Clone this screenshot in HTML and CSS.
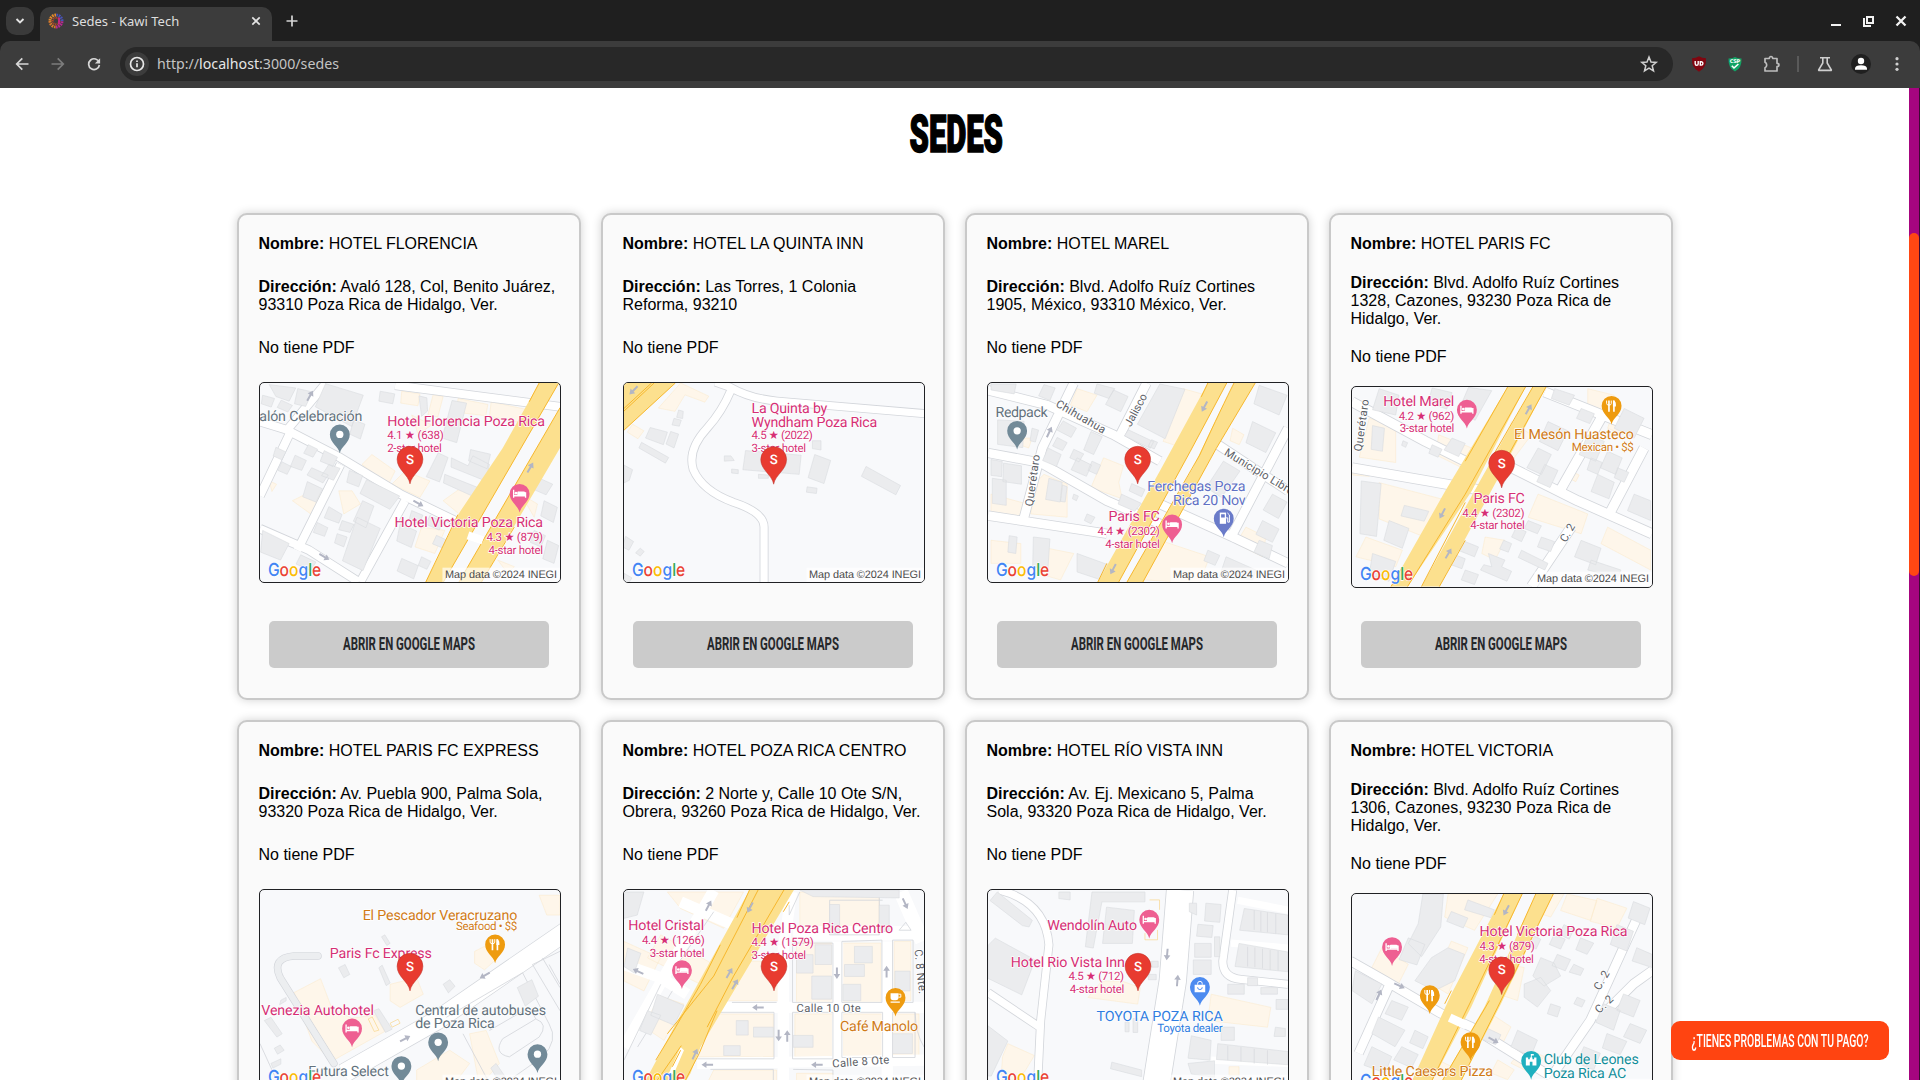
FILE: index.html
```html
<!DOCTYPE html>
<html lang="es">
<head>
<meta charset="utf-8">
<title>Sedes - Kawi Tech</title>
<link rel="stylesheet" href="styles.css">
</head>
<body>
<svg class="defs" width="0" height="0" aria-hidden="true">
  <defs>
    <path id="pin" d="M0 57C-4 36-30 25-30 0A30 30 0 1 1 30 0C30 25 4 36 0 57z"/>
    <g id="place"><use href="#pin" fill="#728a98"/><circle r="11" fill="#fff"/></g>
    <g id="hotel"><use href="#pin" fill="#ee5f92"/><path d="M-18-12v24M-18 6h36M18-5v17M-5-6v10" stroke="#fff" stroke-width="4" fill="none"/><circle cx="-11" cy="-2" r="4" fill="#fff"/><path d="M-5-7h18q5 0 5 5v7h-23z" fill="#fff"/></g>
    <g id="food"><use href="#pin" fill="#ee9b0f"/><path d="M-8-16v34M7-16v34" stroke="#fff" stroke-width="5"/><path d="M-15-16v9q0 5 7 5t7-5v-9" fill="none" stroke="#fff" stroke-width="3"/><path d="M4-16q9 1 9 12v6h-9z" fill="#fff"/></g>
    <g id="cafe"><use href="#pin" fill="#ee9b0f"/><path d="M-15-14h24v13q0 8-8 8h-8q-8 0-8-8zM-15 11h28v4h-28z" fill="#fff"/><path d="M9-11h7v9h-7" fill="none" stroke="#fff" stroke-width="3"/></g>
    <g id="fuel"><use href="#pin" fill="#6a7bc9"/><path d="M-12-18h19v34h-19z" fill="#fff"/><path d="M-8-13h11v10h-11z" fill="#6a7bc9"/><path d="M7-2h5v13h5v-22l-6-6" fill="none" stroke="#fff" stroke-width="3"/></g>
    <g id="shop"><use href="#pin" fill="#4c8bf0"/><path d="M-16-7h32v23h-32z" fill="#fff"/><path d="M-7-7v-3a7 7 0 0 1 14 0v3" fill="none" stroke="#fff" stroke-width="3"/><path d="M-7 1a7 7 0 0 0 14 0" fill="none" stroke="#4c8bf0" stroke-width="3"/></g>
    <g id="civic"><use href="#pin" fill="#1fb0bf"/><path d="M-16-10h7v5h5v-5h8v5h5v-5h7V14H4V3h-8v11h-12z" fill="#fff"/><path d="M-1-8v-13h9v5H2v8" fill="#fff"/></g>
    <g id="marker"><path d="M0 75C-5 46-39 32-39 0A39 39 0 1 1 39 0C39 32 5 46 0 75z" fill="#e83b30" stroke="#b9362d" stroke-width="1.5"/><text class="s" x="0" y="14">S</text></g>
    <g id="arrow" fill="#b3b6c4"><path d="M-3 17V-3H-10L0-18 10-3H3V17z"/></g>
    <g id="brand"><text class="google" x="24" y="585" textLength="161" lengthAdjust="spacingAndGlyphs"><tspan fill="#4285f4">G</tspan><tspan fill="#ea4335">o</tspan><tspan fill="#fbbc05">o</tspan><tspan fill="#4285f4">g</tspan><tspan fill="#34a853">l</tspan><tspan fill="#ea4335">e</tspan></text>
      <rect x="551" y="560" width="355" height="45" fill="#fff" fill-opacity=".65"/><text class="credit" x="559" y="590" textLength="338">Map data ©2024 INEGI</text></g>
  </defs>
</svg>

<header class="browser">
  <div class="tabs">
    <div class="tab-search"><svg width="12" height="12" viewBox="0 0 12 12"><path d="M2.500 4L6 7.500 9.500 4" fill="none" stroke="#e3e3e3" stroke-width="1.900"/></svg></div>
    <div class="tab">
      <svg width="16" height="16" viewBox="-8 -8 16 16"><g fill="none" stroke-width="3" stroke-dasharray="1.600 .8"><path d="M0-6A6 6 0 0 0-6 0" stroke="#e48a2c"/><path d="M-6 0A6 6 0 0 0 0 6" stroke="#d9792b"/><path d="M0 6A6 6 0 0 0 6 0" stroke="#b82a92"/><path d="M6 0A6 6 0 0 0 0-6" stroke="#4753b8"/></g><circle r="3.300" fill="none" stroke="#b5472c" stroke-width="2" stroke-dasharray="1 .7"/><path d="M3-3.500v7" stroke="#d02390" stroke-width="1.700"/></svg>
      <span class="tab-title">Sedes - Kawi Tech</span>
      <svg width="10" height="10" viewBox="0 0 10 10"><path d="M1.300 1.300l7.400 7.400M8.700 1.300L1.300 8.700" stroke="#e3e3e3" stroke-width="1.700"/></svg>
    </div>
    <svg class="plus" width="12" height="12" viewBox="0 0 12 12"><path d="M6 .5v11M.5 6h11" stroke="#d5d5d5" stroke-width="1.700"/></svg>
    <div class="window">
      <svg width="12" height="12" viewBox="0 0 12 12"><path d="M1 10h10" stroke="#f2f2f2" stroke-width="2"/></svg>
      <svg width="12" height="12" viewBox="0 0 12 12"><path d="M4 2h6v6H4zM1 3v8h7" fill="none" stroke="#f2f2f2" stroke-width="2"/></svg>
      <svg width="12" height="12" viewBox="0 0 12 12"><path d="M1.500 1.500l9 9M10.500 1.500l-9 9" stroke="#f2f2f2" stroke-width="2.300"/></svg>
    </div>
  </div>
  <div class="toolbar">
    <div class="tool"><svg width="14" height="14" viewBox="0 0 14 14"><path d="M13.500 7H2M7.300 1.300L1.700 7l5.600 5.700" fill="none" stroke="#d8d8d8" stroke-width="1.700"/></svg></div>
    <div class="tool"><svg width="14" height="14" viewBox="0 0 14 14"><path d="M.5 7H12M6.700 1.300L12.300 7l-5.600 5.700" fill="none" stroke="#7c7c7c" stroke-width="1.700"/></svg></div>
    <div class="tool"><svg width="14" height="14" viewBox="0 0 14 14"><path d="M12.200 5.500A5.400 5.400 0 1 0 12.400 8" fill="none" stroke="#d8d8d8" stroke-width="1.700"/><path d="M13.100 1.200v5.200H7.900z" fill="#d8d8d8"/></svg></div>
    <div class="omnibox">
      <div class="info"><svg width="16" height="16" viewBox="0 0 16 16"><circle cx="8" cy="8" r="6.500" fill="none" stroke="#e8e8e8" stroke-width="1.700"/><path d="M8 7.300v4M8 4.400v1.700" stroke="#e8e8e8" stroke-width="1.700"/></svg></div>
      <span class="url">http://<b>localhost</b>:3000/sedes</span>
      <svg width="18" height="18" viewBox="0 0 18 18"><path d="M9 2l2 5 5.200.4-4 3.400 1.300 5.200L9 13.200 4.500 16l1.300-5.200-4-3.400L7 7z" fill="none" stroke="#d0d0d0" stroke-width="1.500"/></svg>
    </div>
    <div class="tool"><svg width="16" height="16" viewBox="0 0 16 16"><path d="M8 .3Q11 2.300 15 2.300 15.700 12 8 15.700.3 12 1 2.300 5 2.300 8 .3z" fill="#800610"/><path d="M4.200 5v2.700q0 1.600 1.500 1.600T7.200 7.700V5M9.300 5.700v3.400h.9a1.700 1.700 0 0 0 0-3.400z" fill="none" stroke="#fff" stroke-width="1.400"/></svg></div>
    <div class="tool"><svg width="14" height="16" viewBox="0 0 14 16"><path d="M7 1Q10 2.500 13.500 2.500 14 12 7 15.500 0 12 .5 2.500 4 2.500 7 1z" fill="#12a466"/><text x="1.800" y="7" class="csp" textLength="10.400">CSP</text><path d="M3.800 9.700L6 12l4.400-4" fill="none" stroke="#fff" stroke-width="1.600"/></svg></div>
    <div class="tool"><svg width="18" height="18" viewBox="0 0 18 18"><path d="M3 3.500h4.300q.2-2 1.700-2t1.700 2H15v4.800q2 .2 2 1.700t-2 1.700V16H3v-3.300q1.700-.7 1.700-2.700T3 7.300z" fill="none" stroke="#bdbdbd" stroke-width="1.700" stroke-linejoin="round"/></svg></div>
    <div class="divider"></div>
    <div class="tool"><svg width="16" height="16" viewBox="0 0 16 16"><path d="M3 1.800h10M5.800 2v5L1.700 13.800q-.2.600.4.600h11.800q.6 0 .4-.6L10.200 7V2" fill="none" stroke="#cfcfcf" stroke-width="1.600"/></svg></div>
    <div class="tool"><svg width="20" height="20" viewBox="0 0 20 20"><circle cx="10" cy="10" r="10" fill="#202020"/><circle cx="10" cy="7" r="3.200" fill="#fff"/><path d="M4 15.800v-1.500Q4.500 11.300 10 11.300t6 3v1.500z" fill="#fff"/></svg></div>
    <div class="tool"><svg width="4" height="14" viewBox="0 0 4 14"><circle cx="2" cy="1.700" r="1.600" fill="#d0d0d0"/><circle cx="2" cy="7" r="1.600" fill="#d0d0d0"/><circle cx="2" cy="12.300" r="1.600" fill="#d0d0d0"/></svg></div>
  </div>
</header>

<div class="viewport">
<main class="page">
  <h1 class="heading"><svg width="96" height="40" viewBox="0 0 96 40"><text x="1.500" y="37.500" textLength="93.500" lengthAdjust="spacingAndGlyphs">SEDES</text></svg></h1>
  <section class="grid">

    <article class="card">
      <p><b>Nombre:</b> HOTEL FLORENCIA</p>
      <p><b>Dirección:</b> Avaló 128, Col, Benito Juárez, 93310 Poza Rica de Hidalgo, Ver.</p>
      <p>No tiene PDF</p>
      <svg class="map" viewBox="102 543 906 605" preserveAspectRatio="none">
        <path class="com" d="M410 790l30-30 70 50-20 40zM500 850l40-40 75 30-30 50zM200 900l60-30 35 20-40 50zM340 870l40 0 25 40-50 30zM530 568l55 8-6 36-52-8zM625 578l30 6-16 62-30-6zM700 590l90 18-6 34-88-10zM800 600l110 24-20 40-95-20zM655 900l70-50 50 30-60 70zM590 980l70 10-30 70-60-20zM130 840l22 10-14 22zM560 640l60 30-40 30zM820 1080l50 20-20 20zM890 880l50 30-10 40z"/>
        <path class="casing" style="stroke-width:29" d="M102 660L180 684 345 770 530 882 700 965M180 690L300 545M102 885L190 700M345 790L215 1050M540 900L405 1146M102 985L250 1050 400 1146M510 550L1008 615"/>
        <path class="road" style="stroke-width:24" d="M102 660L180 684 345 770 530 882 700 965M180 690L300 545M102 885L190 700M345 790L215 1050M540 900L405 1146M102 985L250 1050 400 1146M510 550L1008 615"/>
        <path class="bld" d="M300 545l114 35-35 95-110-60zM385 655l34 13-14 45-32-15zM465 568l44 8-6 30-42-8zM582 582l24 6 2 40-18 16zM682 596l44 8-30 120-44-14zM130 548l80 10-20 40-40-14zM166 595l34 16-14 20-32-14zM216 560l44 10-20 44-34-8zM110 580l36 10-10 26-30-10zM640 755l30 14-26 74-40-16zM680 770l50 24 15-30 50 26-12 50-104-42zM660 820l100 40-12 28-92-42zM738 745l60 14-10 44-56-24zM248 730l28 14-14 24-28-12zM296 748l40 20-14 28-38-16zM208 762l34 16-14 30-34-12zM168 782l28 14-12 24-28-12zM258 800l50 22-16 24-48-24zM310 790l34 12-20 36-36-14zM245 842l46 22-20 40-40-16zM150 738l30 14-12 24-26-12zM372 808l40 16-12 34-36-14zM424 836l100 50-30 40-90-48zM412 900l34 16-24 66-38-20zM310 918l40 24-10 26-44-16zM350 960l36 12-12 24-34-8zM275 966l32 16-10 26-34-12zM395 950l70 34-52 128-62-30zM335 1000l30 10-10 30-28-12zM560 930l34 14-12 26-30-12zM615 945l40 20-12 24-40-18zM525 970l50 22-16 50-44-20zM635 1005l30 14-12 24-30-12zM590 1070l28 14-12 24-26-12zM530 1075l50 22-14 40-50-24zM925 790l32 14-14 30-30-14zM942 830l44 20-20 32-42-18zM960 900l40 20-12 46-38-20zM930 990l34 16-14 34-32-14zM970 1020l34 16-14 54-34-14zM110 990l80 40-26 50-60-24zM225 1064l46 22-16 26-44-20z"/>
        <path class="hwy" d="M602 1148L705 935 835 740 945 543H1004L655 1148zM702 1148L1008 618V740L770 1148z"/>
        <path class="line" d="M655 1148L1004 543M702 1148L1008 618M602 1148L700 942M945 543L915 600M770 1148L870 980"/>
        <path class="road" style="stroke-width:25" d="M730 1005L775 1020"/>
        <use href="#arrow" transform="translate(253 582) rotate(30)"/><use href="#arrow" transform="translate(580 908) rotate(120)"/><use href="#arrow" transform="translate(296 1070) rotate(120)"/><use href="#arrow" transform="translate(918 800) rotate(30)"/>
        <text class="lbl gray" x="100" y="657" textLength="311">alón Celebración</text><use href="#place" x="343" y="699"/>
        <g class="pink"><text class="lbl" x="486" y="672" textLength="477">Hotel Florencia Poza Rica</text><text class="sub" x="486" y="714" textLength="171">4.1 ★ (638)</text><text class="sub" x="486" y="752" textLength="165">2-star hotel</text>
        <text class="lbl" x="508" y="981" textLength="449">Hotel Victoria Poza Rica</text><text class="sub" x="786" y="1023" textLength="171">4.3 ★ (879)</text><text class="sub" x="792" y="1062" textLength="165">4-star hotel</text></g>
        <use href="#hotel" x="886" y="879"/><use href="#marker" x="555" y="774"/><use href="#brand" x="102" y="543"/>
      </svg>
      <button class="open"><svg width="136" height="20" viewBox="0 0 136 20"><text x="2" y="16" textLength="132" lengthAdjust="spacingAndGlyphs">ABRIR EN GOOGLE MAPS</text></svg></button>
    </article>

    <article class="card">
      <p><b>Nombre:</b> HOTEL LA QUINTA INN</p>
      <p><b>Dirección:</b> Las Torres, 1 Colonia Reforma, 93210</p>
      <p>No tiene PDF</p>
      <svg class="map" viewBox="99 33 906 605" preserveAspectRatio="none">
        <path class="com" d="M270 33l85 40-12 18-60-22-30 50-50-10zM125 158l34 20-18 24-32-20z"/>
        <path class="casing" style="stroke-width:27" d="M375 30L420 46Q480 80 560 88L1008 126M422 55Q395 120 350 170Q290 235 308 295Q335 360 430 395Q522 425 522 470V640"/>
        <path class="road" style="stroke-width:22" d="M375 30L420 46Q480 80 560 88L1008 126M422 55Q395 120 350 170Q290 235 308 295Q335 360 430 395Q522 425 522 470V640"/>
        <path class="bld" d="M264 115l14 4-2 22-18-4zM250 140l22 6-6 18-22-4zM178 168l52 14-12 38-54-20zM240 180l24 8-14 42-24-12zM152 213l82 46-10 17-80-46zM466 238l168 14-6 58-170-14zM402 254l20 0 10 14-30 2zM424 294l20 2 0 12-20-2zM675 250l48 18-20 70-48-18zM652 348l30 4-2 16-30-4zM830 286l104 58-14 28-104-56zM668 208l26 0 0 28-26-4zM505 310l30 2v10h-30zM99 282l26 14-10 32-16 8zM104 498l24 16-14 26-20-10zM148 534l12 10-12 14-14-10zM99 610l24 14-10 16h-14z"/>
        <path class="hwy" d="M99 33H254L99 176z"/><path class="line" d="M254 33L99 176M190 33L99 118M182 33L99 110"/>
        <use href="#arrow" transform="translate(128 55) rotate(225)"/>
        <g class="pink"><text class="lbl" x="484" y="123" textLength="229">La Quinta by</text><text class="lbl" x="484" y="165" textLength="380">Wyndham Poza Rica</text><text class="sub" x="484" y="204" textLength="185">4.5 ★ (2022)</text><text class="sub" x="484" y="242" textLength="165">3-star hotel</text></g>
        <use href="#marker" x="551" y="265"/><use href="#brand" x="99" y="33"/>
      </svg>
      <button class="open"><svg width="136" height="20" viewBox="0 0 136 20"><text x="2" y="16" textLength="132" lengthAdjust="spacingAndGlyphs">ABRIR EN GOOGLE MAPS</text></svg></button>
    </article>

    <article class="card">
      <p><b>Nombre:</b> HOTEL MAREL</p>
      <p><b>Dirección:</b> Blvd. Adolfo Ruíz Cortines 1905, México, 93310 México, Ver.</p>
      <p>No tiene PDF</p>
      <svg class="map" viewBox="81 63 906 605" preserveAspectRatio="none">
        <path class="com" d="M430 290l60 24-14 50 10 50-94-34zM670 80l70 20-70 160-60-20zM250 340l70 30v100l-110-10 20-100zM600 540l150 50-30 80-170-10zM90 400l110 30 0 50-110-20zM240 560l100 20-40 80-70-20zM350 80l60 20-30 50-50-20zM820 200l34 20-14 30-28-12zM860 500l60 30-10 60-80-40zM180 230l34 0-10 30-30-10zM90 540l90 10v60h-90z"/>
        <path class="casing" style="stroke-width:31" d="M81 85L260 130 460 220 600 300M340 63L245 260 190 470M560 63L470 240M81 275L240 305 440 420 600 490M81 465L440 520M600 430L820 530 987 610M987 200L810 540M760 240L987 390"/>
        <path class="road" style="stroke-width:26" d="M81 85L260 130 460 220 600 300M340 63L245 260 190 470M560 63L470 240M81 275L240 305 440 420 600 490M81 465L440 520M600 430L820 530 987 610M987 200L810 540M760 240L987 390"/>
        <path class="bld" d="M90 66l76 0-6 30-70-12zM250 68l34 10-16 38-34-14zM410 66l54 14-18 30-44-16zM460 84l44 20-22 46-46-22zM600 66l76 16-60 150-84-44zM505 205l76 36-10 20-78-38zM575 235l18 8-10 20-18-8zM308 178l40 22-16 28-42-22zM290 228l30 16-14 24-30-14zM262 260l40 20-14 36-42-18zM340 264l30 14-14 24-28-12zM392 210l34 16-26 54-30-14zM350 290l44 22-16 34-46-20zM395 300l26 12-12 28-26-12zM110 175l80 4-4 80-76-10zM214 200l20 6-10 36-16-4zM90 295l34 6-2 46-32-4zM128 306l54 8 0 56-56-8zM94 352l42 6v76l-42-6zM265 352l40 12-6 60-44-8zM306 372l14 6-6 46-14-2zM515 368l40 18-10 22-38-18zM484 400l60 28-20 24-50-22zM340 400l14 6-6 14-12-6zM380 460l24 10-12 20-20-10zM145 526l24 4-4 50-24-4zM218 530l50 6-6 90-46-6zM350 580l110 40-20 46-90-30zM792 300l50 30-56 80-46-30zM900 70l84 30-24 60-76-34zM880 180l70 34-30 60-60-30zM940 400l44 24-26 50-46-26zM910 480l50 26-20 40-50-24zM900 540l40 16-10 40-46-20zM745 570l36 16-14 30-34-14zM800 590l90 40-10 30-100-10z"/>
        <path class="hwy" d="M412 668L600 330 745 63H802L692 270 475 668zM500 668L700 320Q760 190 824 63H888L770 262 548 668z"/>
        <path class="line" d="M412 668L440 610M745 63L725 105M802 63L692 270 475 668M500 668L720 282Q790 130 824 63M888 63L770 262 548 668"/>
        <use href="#arrow" transform="translate(266 212) rotate(25)"/><use href="#arrow" transform="translate(735 134) rotate(208)"/><use href="#arrow" transform="translate(459 627) rotate(208)"/>
        <g class="street"><text transform="translate(283 133) rotate(30)" textLength="168">Chihuahua</text><text transform="translate(512 198) rotate(-62)" textLength="108">Jalisco</text><text transform="translate(216 438) rotate(-82)" textLength="158">Querétaro</text><text transform="translate(792 280) rotate(31)" textLength="238">Municipio Libre</text></g>
        <text class="lbl gray" x="104" y="165" textLength="157">Redpack</text><use href="#place" x="169" y="208"/>
        <g class="blue2"><text class="lbl" x="562" y="390" textLength="297">Ferchegas Poza</text><text class="lbl" x="640" y="432" textLength="219">Rica 20 Nov</text></g><use href="#fuel" x="793" y="474"/>
        <g class="pink"><text class="lbl" x="445" y="483" textLength="155">Paris FC</text><text class="sub" x="412" y="525" textLength="188">4.4 ★ (2302)</text><text class="sub" x="435" y="563" textLength="165">4-star hotel</text></g>
        <use href="#hotel" x="637" y="492"/><use href="#marker" x="533" y="294"/><use href="#brand" x="81" y="63"/>
      </svg>
      <button class="open"><svg width="136" height="20" viewBox="0 0 136 20"><text x="2" y="16" textLength="132" lengthAdjust="spacingAndGlyphs">ABRIR EN GOOGLE MAPS</text></svg></button>
    </article>

    <article class="card">
      <p><b>Nombre:</b> HOTEL PARIS FC</p>
      <p><b>Dirección:</b> Blvd. Adolfo Ruíz Cortines 1328, Cazones, 93230 Poza Rica de Hidalgo, Ver.</p>
      <p>No tiene PDF</p>
      <svg class="map" viewBox="78 375 906 605" preserveAspectRatio="none">
        <path class="com" d="M130 470l80 24v110l-110-16zM80 610l50 6v30l-50-4zM160 665l190 50-40 120-150-60zM640 700l150 60-20 60-160-50zM340 520l100 40-30 60-80-40zM560 480l60 40-60 80-40-30zM790 380l80 20-20 50-60-20zM120 830l110 40-20 50-120-30zM850 800l130 70v60l-150-80zM740 630l24 12-10 20-24-12zM480 830l60 10-30 60-40-20zM860 470l60 20-20 30-50-20z"/>
        <path class="casing" style="stroke-width:33" d="M78 420L300 540 460 620M78 620L480 690M540 610L760 720 984 820M660 390L984 520M830 470L700 700M960 560L850 770M740 800L620 980"/>
        <path class="road" style="stroke-width:28" d="M78 420L300 540 460 620M78 620L480 690M540 610L760 720 984 820M660 390L984 520M830 470L700 700M960 560L850 770M740 800L620 980"/>
        <path class="bld" d="M160 380l60 20-10 60-70-16zM320 378l60 14-16 50-56-20zM430 376l70 10-50 90-50-30zM140 492l36 8-6 70-34-6zM320 550l30 14-12 24-28-12zM380 530l40 16-20 40-44-20zM232 538l14 6-6 14-12-6zM106 660l60 8-14 160-50-8zM236 734l74 18-14 30-70-16zM190 780l60 24-20 60-56-24zM140 880l70 24-20 60-60-20zM640 560l40 20-30 60-44-20zM670 480l60 28-30 60-56-28zM690 380l60 20-16 30-54-20zM660 610l40 18-24 52-40-18zM790 520l50 20-26 60-50-20zM850 570l44 20-20 50-46-20zM820 640l50 24-16 50-54-22zM800 590l34 14-14 36-32-14zM880 620l34 14-14 30-30-14zM930 700l50 20v60l-70-30zM900 440l60 30-30 60-60-30zM770 440l40 16-14 30-40-16zM610 780l40 16-12 24-40-16zM574 800l30 14-14 30-30-14zM650 830l40 14-12 30-40-14zM536 840l24 10-10 26-26-10zM590 870l80 40-10 20-80-38zM490 880l50 20-10 20 30 14-14 30-80-34 10-16 24 6zM410 840l50 20-12 30-50-20zM380 880l40 16-10 30-44-16zM420 930l40 14-12 30-40-14zM770 840l60 24-16 50-64-24zM800 900l90 30-10 24-90-24z"/>
        <path class="hwy" d="M196 980L360 690 548 375H602L440 690 246 980zM288 980L470 650 624 375H664L520 650 342 980z"/>
        <path class="line" d="M548 375L420 600M230 920L196 980M602 375L420 700 246 980M624 375L500 590M420 725L288 980M664 375L540 600M420 840L342 980"/>
        <use href="#arrow" transform="translate(611 443) rotate(30)"/><use href="#arrow" transform="translate(351 758) rotate(208)"/><use href="#arrow" transform="translate(369 880) rotate(30)"/>
        <g class="street"><text transform="translate(107 571) rotate(-82)" textLength="158">Querétaro</text><text transform="translate(724 848) rotate(-60)" textLength="58">C. 2</text></g>
        <g class="pink"><text class="lbl" x="172" y="434" textLength="215">Hotel Marel</text><text class="sub" x="219" y="475" textLength="168">4.2 ★ (962)</text><text class="sub" x="222" y="512" textLength="165">3-star hotel</text><text class="lbl" x="445" y="726" textLength="155">Paris FC</text><text class="sub" x="411" y="768" textLength="188">4.4 ★ (2302)</text><text class="sub" x="435" y="806" textLength="165">4-star hotel</text></g>
        <g class="orange"><text class="lbl" x="567" y="534" textLength="362">El Mesón Huasteco</text><text class="sub" x="742" y="569" textLength="187">Mexican • $$</text></g>
        <use href="#hotel" x="425" y="444"/><use href="#food" x="862" y="432"/><use href="#marker" x="530" y="606"/><use href="#brand" x="78" y="375"/>
      </svg>
      <button class="open"><svg width="136" height="20" viewBox="0 0 136 20"><text x="2" y="16" textLength="132" lengthAdjust="spacingAndGlyphs">ABRIR EN GOOGLE MAPS</text></svg></button>
    </article>

    <article class="card">
      <p><b>Nombre:</b> HOTEL PARIS FC EXPRESS</p>
      <p><b>Dirección:</b> Av. Puebla 900, Palma Sola, 93320 Poza Rica de Hidalgo, Ver.</p>
      <p>No tiene PDF</p>
      <svg class="map" viewBox="87 534 906 605" preserveAspectRatio="none">
        <path class="com" d="M190 845l80-42 34 90 60 30 70-10 30 50-160 90-60-60zM480 820l80-20 20 50-70 40-30-20zM735 720l40-20 30 40-40 36-30-20zM930 550h63v60l-40 0zM560 1080l100-60 60 40-60 80h-100zM720 970l50-10 40 100-60 70z"/>
        <path class="casing" style="stroke-width:60" d="M340 1090L620 930 1010 660"/><path class="road" style="stroke-width:56" d="M340 1090L620 930 1010 660"/>
        <path class="casing" style="stroke-width:23;stroke-linecap:round" d="M262 734H190Q120 740 148 800L310 1060"/><path style="stroke-width:19;stroke:#eceef0;fill:none;stroke-linecap:round" d="M262 734H190Q120 740 148 800L310 1060"/>
        <path class="casing" style="stroke-width:2.500" d="M650 920L880 785 960 940Q990 990 940 1040L800 1139M780 960L900 890 920 925 820 985Q790 1030 840 1040L930 980Q960 940 920 925M910 760L993 900M940 740L993 830M910 760L993 720M960 760L993 820M700 970L790 1139M87 1000L150 1139"/>
        <path class="bld" d="M464 670l16 26-10 6-16-26zM324 770l20-10 14 30-18 10zM456 762l24 54-12 8-22-54zM640 820l20-14 16 20-20 20zM864 830l44-24 20 50-40 30zM430 900l16-6 40 62-20 10zM100 930l20-10 34 50-16 10zM130 1014l18-10 12 16-20 12zM120 1060l30-14v16l-24 12zM150 868l16-8v10l-20 12zM800 1060l34 50-20 14-30-50z"/>
        <path d="M414 925l12-6 20 40-14 4zM480 938l24-12 6 12-24 12z" fill="none" stroke="#f8d486" stroke-width="2"/>
        <use href="#arrow" transform="translate(766 793) rotate(240)"/><use href="#arrow" transform="translate(525 985) rotate(62)"/>
        <g class="orange"><text class="lbl" x="397" y="624" textLength="467">El Pescador Veracruzano</text><text class="sub" x="679" y="656" textLength="185">Seafood • $$</text></g>
        <g class="pink"><text class="lbl" x="298" y="741" textLength="308">Paris Fc Express</text><text class="lbl" x="91" y="912" textLength="340">Venezia Autohotel</text></g>
        <g class="gray"><text class="lbl" x="556" y="912" textLength="395">Central de autobuses</text><text class="lbl" x="556" y="954" textLength="240">de Poza Rica</text><text class="lbl" x="233" y="1098" textLength="243">Futura Select</text></g>
        <use href="#food" x="797" y="699"/><use href="#hotel" x="365" y="954"/><use href="#place" x="625" y="996"/><use href="#place" x="514" y="1068"/><use href="#place" x="925" y="1032"/><use href="#marker" x="540" y="765"/><use href="#brand" x="87" y="534"/>
      </svg>
      <button class="open">Abrir</button>
    </article>

    <article class="card">
      <p><b>Nombre:</b> HOTEL POZA RICA CENTRO</p>
      <p><b>Dirección:</b> 2 Norte y, Calle 10 Ote S/N, Obrera, 93260 Poza Rica de Hidalgo, Ver.</p>
      <p>No tiene PDF</p>
      <svg class="map" viewBox="69 84 906 605" preserveAspectRatio="none">
        <path class="com" d="M69 240l110 50-50 100-60-30zM200 90l230 0-60 110-130-60zM180 220l160 90-40 60-160-80zM600 90h240v130H600zM590 245h110v180H590zM725 245h120v180H725zM885 240h50v180h-50zM400 300h140v120H380zM350 460h170v130H290zM585 460h120v130H585zM730 460h120v130H730zM880 460h80v130h-80zM340 630h190v60H310zM590 640h110v50H590zM160 400l90 30-60 110-60-40z"/>
        <path class="road" style="stroke-width:34" d="M340 85L200 330 69 560M550 250V689M575 90L552 250M714 240V600M864 240V689M300 440H975M290 610L975 600M69 310L180 350 260 400M240 120L400 190"/>
        <path class="road" style="stroke-width:44" d="M580 215H960M905 90L970 240"/>
        <path class="casing" style="stroke-width:2.500" d="M568 130V160L600 90M690 115V220H840V90M690 115H850M578 245H700V425H578zM727 240L848 236V425H727zM880 236H942V425H880zM395 425H530M578 455H700V596H578zM727 455H850V592H727zM880 455H948V592H880zM330 455H522V596H290M330 628H520V689M580 628L700 630V689M900 206L920 182 936 206zM975 560Q950 520 948 455M180 370L69 600M215 390L110 560M340 150L230 310"/>
        <path class="bld" d="M69 90h60l-20 70-40 10zM600 84h300v24l-260-4zM690 128h30v90h-30zM840 130h30v80h-30zM646 250h50v60h-50zM590 280h50v56h-50zM636 345h60v70h-60zM765 255h54v50h-54zM735 310h60v36h-60zM730 370h54v50h-54zM887 330h46v60h-46zM580 525h60v36h-60zM408 480h36v44h-36zM460 500h60v30h-60zM370 556h50v30h-50zM880 520h60v60h-60zM170 400l80 34-30 60-70-30zM80 260l40 16-20 60-31-20zM140 450l40 14-30 60-34-14z"/>
        <path class="hwy" d="M448 84H582L300 560 270 640 240 689H120L220 500Z"/><path d="M240 560l-40 90 20-10 30-70z" fill="#fff"/>
        <path class="line" d="M448 84L410 168M360 250L300 370 225 500 165 600M474 84L340 345 200 520M552 84L400 345 320 500M568 120L550 150M242 556L150 689M240 570L215 620M350 450L296 580 240 689"/>
        <use href="#arrow" transform="translate(324 132) rotate(28)"/><use href="#arrow" transform="translate(112 331) rotate(-65)"/><use href="#arrow" transform="translate(450 137) rotate(208)"/><use href="#arrow" transform="translate(387 336) rotate(30)"/><use href="#arrow" transform="translate(404 370) rotate(30)"/><use href="#arrow" transform="translate(283 582) rotate(25)"/><use href="#arrow" transform="translate(474 440) rotate(-90)"/><use href="#arrow" transform="translate(321 614) rotate(-90)"/><use href="#arrow" transform="translate(652 614) rotate(-90)"/><use href="#arrow" transform="translate(536 525) rotate(180)"/><use href="#arrow" transform="translate(562 527)"/><use href="#arrow" transform="translate(712 336) rotate(180)"/><use href="#arrow" transform="translate(862 332)"/><use href="#arrow" transform="translate(918 125) rotate(155)"/>
        <g class="street"><text x="590" y="455" textLength="194">Calle 10 Ote</text><text transform="translate(699 622) rotate(-4)" textLength="172">Calle 8 Ote</text><text transform="translate(946 265) rotate(84)" textLength="136">C. 8 Nte.</text></g>
        <g class="pink"><text class="lbl" x="82" y="206" textLength="229">Hotel Cristal</text><text class="sub" x="123" y="249" textLength="190">4.4 ★ (1266)</text><text class="sub" x="147" y="287" textLength="165">3-star hotel</text><text class="lbl" x="454" y="213" textLength="428">Hotel Poza Rica Centro</text><text class="sub" x="454" y="255" textLength="188">4.4 ★ (1579)</text><text class="sub" x="454" y="293" textLength="165">3-star hotel</text></g>
        <text class="lbl orange" x="721" y="513" textLength="236">Café Manolo</text>
        <use href="#hotel" x="244" y="327"/><use href="#cafe" x="889" y="411"/><use href="#marker" x="522" y="315"/><use href="#brand" x="69" y="84"/>
      </svg>
      <button class="open">Abrir</button>
    </article>

    <article class="card">
      <p><b>Nombre:</b> HOTEL RÍO VISTA INN</p>
      <p><b>Dirección:</b> Av. Ej. Mexicano 5, Palma Sola, 93320 Poza Rica de Hidalgo, Ver.</p>
      <p>No tiene PDF</p>
      <svg class="map" viewBox="66 84 906 605" preserveAspectRatio="none">
        <path class="com" d="M110 590l16-40 80 36-30 50-60 40-10-30zM410 360l60 0 56 20-8 50-150-20zM740 400l180 40-10 60-180-20zM794 620h30v26h-30z"/>
        <path class="casing" style="stroke-width:27" d="M100 84Q240 120 250 250L225 480 215 689M66 395L222 500M805 84L775 300Q775 350 830 355L972 370"/>
        <path class="road" style="stroke-width:22" d="M100 84Q240 120 250 250L225 480 215 689M66 395L222 500M805 84L775 300Q775 350 830 355L972 370"/>
        <path class="casing" style="stroke-width:85" d="M646 84L624 360 572 689"/><path class="road" style="stroke-width:80" d="M646 84L624 360 572 689"/>
        <path class="road" style="stroke-width:22" d="M820 115L972 145M800 245L972 260M740 600L972 610"/>
        <path class="bld" d="M94 90L200 176l-10 20-20-4-98-76zM88 230l120 66-40 106-102-50v-100zM66 496l60 46-50 106h-10zM280 90h34v24l-34-4zM380 90h160v30H410l-26 140-24-4zM424 136l84 10-6 100h-90zM724 124l46 4-4 54-46-4zM674 124h22v36l-22-10zM700 188l46 4-4 36-46-4zM690 246h50v42h-50zM686 296h54v44h-54zM750 226h16v60h-16zM840 140l132 20v60l-146-14zM824 246l148 26v60l-160-16zM850 350h30v24h-30zM790 370h50v30h-50zM890 380h50v20h-50zM480 484h12v30h-12zM504 474h14v42h-14zM560 300h20v18h-20zM550 340h24v16h-24zM440 606l90 24v20l-94-24zM680 526l60 14-4 60-66-6zM760 550l212 24v40l-216-16zM670 610l80-8v50l-70-10zM936 416h36v30h-36zM934 500l30 4v24h-34zM770 500h40v40h-40z"/>
        <path d="M870 145v60M890 150v60M910 152v60M935 156v60M850 256v60M872 258v60M895 262v60M918 266v60M942 268v60M790 556v44M830 560v44M870 566v44M910 570v44" stroke="#d6d8dc" stroke-width="2"/>
        <path d="M554 114h30v30M540 215v20h38v-30" fill="none" stroke="#f8d486" stroke-width="2"/>
        <use href="#arrow" transform="translate(607 279) rotate(185)"/><use href="#arrow" transform="translate(638 359) rotate(5)"/>
        <g class="pink"><text class="lbl" x="245" y="204" textLength="271">Wendolín Auto</text><text class="lbl" x="135" y="318" textLength="344">Hotel Rio Vista Inn</text><text class="sub" x="309" y="357" textLength="168">4.5 ★ (712)</text><text class="sub" x="313" y="395" textLength="165">4-star hotel</text></g>
        <g class="blue"><text class="lbl" x="394" y="480" textLength="381">TOYOTA POZA RICA</text><text class="sub" x="577" y="515" textLength="198">Toyota dealer</text></g>
        <use href="#hotel" x="553" y="174"/><use href="#shop" x="706" y="378"/><use href="#marker" x="519" y="315"/><use href="#brand" x="66" y="84"/>
      </svg>
      <button class="open">Abrir</button>
    </article>

    <article class="card">
      <p><b>Nombre:</b> HOTEL VICTORIA</p>
      <p><b>Dirección:</b> Blvd. Adolfo Ruíz Cortines 1306, Cazones, 93230 Poza Rica de Hidalgo, Ver.</p>
      <p>No tiene PDF</p>
      <svg class="map" viewBox="0 97 906 605" preserveAspectRatio="none">
        <path class="com" d="M90 260l80 50-30 60-80-50zM290 97h150l-70 110-90-40zM470 310l50 10-20 100-60-20zM650 97l90 20-20 60-90-30zM740 110l90 30-30 60-80-20zM420 460l60 40-30 60-70-40zM300 240l50 20-60 140-50-30zM560 97h80l-40 70-60-20zM260 600l60 30-30 60h-80zM520 560l60 30-40 50-60-30zM440 600l50 30-20 30-50-20z"/>
        <path class="casing" style="stroke-width:31" d="M-5 300L100 360 270 460 360 500 520 600 600 650M110 380L20 580M870 150L720 480 610 640M740 480L850 370 906 330"/>
        <path class="road" style="stroke-width:26" d="M-5 300L100 360 270 460 360 500 520 600 600 650M110 380L20 580M870 150L720 480 610 640M740 480L850 370 906 330"/>
        <path class="bld" d="M214 97h62l-8 100-58 90-40-40 30-60zM170 230l50 20-24 62-54-16zM300 150l50 20-14 30-50-20zM350 115l80 30-10 24-80-24zM240 290l50-30 50 20-30 80-60 30-60-30zM10 330l80 40-30 60-60-40zM120 420l50 20-20 40-50-20zM80 470l80 40-30 50-70-40zM190 510l40 20-16 36-40-18zM150 560l50 24-20 40-54-24zM60 560l60 30-20 50-64-24zM640 190l30 14-14 30-30-14zM610 220l34 14-14 30-34-14zM620 280l40 16-16 34-40-16zM570 290l40 16 20 40-50 30-34-30zM520 370l50-20 30 40-40 50-40-30zM600 430l30 10-10 30-30-10zM670 310l30 14-10 20-34-10zM680 410l24 10-10 20-24-10zM690 230l40 16-20 34-34-14zM540 220l30 14-14 30-30-14zM500 510l60 30-20 50-60-30zM800 190l50 20-20 60-50-20zM860 260l46 20v40l-60-20zM820 400l50 20-20 50-50-20zM760 430l50 20-20 60-54-24zM840 490l50 20-20 40-50-20zM770 520l60 24-20 40-54-20zM700 560l50 20-20 50-50-20zM850 120l50 20-16 50-50-20zM400 500l50 24-16 30-50-20z"/>
        <path class="hwy" d="M164 702L300 400 458 97H514L360 440 222 702zM250 702L400 440 555 97H608L450 430 310 702z"/>
        <path class="line" d="M458 97L430 160M514 97L360 420 222 702M555 97L500 220M415 420L250 702M608 97L440 440 310 702M280 430L300 390"/>
        <path class="road" style="stroke-width:26" d="M295 472L345 495"/>
        <use href="#arrow" transform="translate(466 146) rotate(208)"/><use href="#arrow" transform="translate(143 375) rotate(115)"/><use href="#arrow" transform="translate(81 403) rotate(25)"/><use href="#arrow" transform="translate(427 540) rotate(120)"/>
        <g class="street"><text transform="translate(748 391) rotate(-60)" textLength="62">C. 2</text><text transform="translate(747 461) rotate(-44)" textLength="62">C. 2</text></g>
        <g class="pink"><text class="lbl" x="385" y="225" textLength="447">Hotel Victoria Poza Rica</text><text class="sub" x="385" y="266" textLength="167">4.3 ★ (879)</text><text class="sub" x="384" y="305" textLength="165">4-star hotel</text></g>
        <g class="orange"><text class="lbl" x="60" y="648" textLength="366">Little Caesars Pizza</text><text class="sub" x="195" y="687" textLength="230">American • Pizza • $</text></g>
        <g class="teal"><text class="lbl" x="579" y="612" textLength="287">Club de Leones</text><text class="lbl" x="579" y="654" textLength="249">Poza Rica AC</text></g>
        <use href="#hotel" x="121" y="258"/><use href="#food" x="235" y="404"/><use href="#food" x="358" y="546"/><use href="#civic" x="541" y="603"/><use href="#marker" x="452" y="327"/><use href="#brand" x="0" y="97"/>
      </svg>
      <button class="open">Abrir</button>
    </article>
  </section>
</main>
<div class="scrollbar"><div class="thumb"></div></div>
</div>
<a class="help"><svg width="182" height="24" viewBox="0 0 182 24"><text x="2.500" y="18" textLength="177" lengthAdjust="spacingAndGlyphs">¿TIENES PROBLEMAS CON TU PAGO?</text></svg></a>
</body>
</html>
```
FILE: styles.css
```css
* { box-sizing: border-box; }
html, body { margin: 0; height: 100%; overflow: hidden; background: #fff; }
body { display: flex; flex-direction: column; font: 16px/18px "Liberation Sans", Arial, sans-serif; color: #000; }
svg { display: block; flex: none; overflow: visible; }
.defs { position: absolute; }

.browser { flex: none; height: 88px; background: #1f1f1f; font-family: "Noto Sans", sans-serif; color: #dedede; }
.tabs { display: flex; height: 41px; padding: 7px 13px 0 6px; align-items: flex-start; }
.tab-search { width: 28px; height: 28px; border-radius: 10px; background: #3a3a3a; display: flex; align-items: center; justify-content: center; }
.tab { width: 232px; height: 34px; margin-left: 6px; padding: 0 11px 6px 8px; border-radius: 10px 10px 0 0; background: #3c3c3c; display: flex; align-items: center; gap: 8px; }
.tab-title { flex: 1; font-size: 13px; white-space: nowrap; }
.plus { margin: 8px 0 0 14px; }
.window { margin: 8px 0 0 auto; display: flex; gap: 20.500px; }
.toolbar { display: flex; align-items: center; height: 47px; padding: 0 5px 1px 4px; background: #3c3c3c; border-radius: 10px 10px 0 0; }
.tool { width: 36px; height: 36px; flex: none; display: flex; align-items: center; justify-content: center; }
.omnibox { flex: 1; height: 34px; margin: 0 8px; border-radius: 17px; background: #282828; display: flex; align-items: center; padding: 0 15px 0 5px; }
.info { width: 24px; height: 24px; border-radius: 12px; background: #3c3c3c; display: flex; align-items: center; justify-content: center; }
.url { flex: 1; margin-left: 8px; padding-bottom: 1px; font-size: 14.200px; color: #c4c4c4; }
.url b { font-weight: 400; color: #e6e6e6; }
.divider { width: 2px; height: 16px; margin: 0 8px; background: #5a5a5a; flex: none; }
.csp { font: bold 5px "DejaVu Sans", sans-serif; fill: #fff; }

.viewport { flex: 1; min-height: 0; display: flex; overflow: hidden; }
.page { flex: 1; min-width: 0; padding: 0 235px 0 237px; }
.heading { margin: 0; height: 125px; padding-top: 26px; display: flex; justify-content: center; }
.heading text { font: 900 51px Roboto, sans-serif; stroke: #000; stroke-width: 1.600px; }
.grid { display: grid; grid-template-columns: repeat(4, 344px); grid-auto-rows: 487px; gap: 20px; }
.card { display: flex; flex-direction: column; justify-content: space-between; padding: 20.400px 20px 20px 20px; border: 2px solid #c9c9c9; border-radius: 10px; background: #fafafa; box-shadow: 0 0 10px rgba(0, 0, 0, .18); }
.card p { margin: 0 -2px 0 -.5px; }
.open { margin: 13px 10px 10px; height: 47px; flex: none; padding: 0; border: 0; border-radius: 5px; background: #cbcbcb; display: flex; align-items: center; justify-content: center; }
.open text { font: 700 18.200px Roboto, sans-serif; fill: #26282b; }

.map { width: 302px; height: 201.500px; border: 1px solid #202124; border-radius: 5px; background: #f8f9fb; overflow: hidden; text-rendering: geometricPrecision; }
.casing, .road { fill: none; stroke-linejoin: round; }
.casing { stroke: #d3d6db; }
.road { stroke: #fff; }
.bld { fill: #ebecee; stroke: #d9dbdf; stroke-width: 1.800px; }
.com { fill: #fef6ea; stroke: #fae8c8; stroke-width: 1.500px; }
.hwy { fill: #fce08e; }
.line { fill: none; stroke: #f6b62c; stroke-width: 3px; }
.lbl, .sub { font-family: Roboto, "DejaVu Sans", sans-serif; paint-order: stroke; stroke: #fff; stroke-width: 4px; stroke-linejoin: round; }
.lbl { font-size: 43px; }
.sub { font-size: 35px; }
.street text { font: 34px Roboto, sans-serif; fill: #5c6066; paint-order: stroke; stroke: #fff; stroke-width: 5px; }
.pink { fill: #d62f75; }
.gray { fill: #63727d; }
.orange { fill: #d07a16; }
.blue { fill: #2f7de1; }
.blue2 { fill: #6070c4; }
.teal { fill: #128e9b; }
.s { font: 500 40px Roboto, sans-serif; fill: #fff; text-anchor: middle; }
.google { font: 500 54px Inter, sans-serif; paint-order: stroke; stroke: #fff; stroke-width: 4px; }
.credit { font: 33px "Liberation Sans", sans-serif; fill: #4c4c4c; }

.scrollbar { width: 11px; flex: none; padding-top: 145px; background: #a6057f; border-right: 1px solid #3c0a31; }
.thumb { height: 343px; border-radius: 5px; background: #ff4713; }
.help { position: fixed; right: 31px; bottom: 20px; width: 218px; height: 39px; border-radius: 9px; background: #ff4411; display: flex; align-items: center; justify-content: center; }
.help text { font: 500 18px Roboto, sans-serif; fill: #fff; }
```
